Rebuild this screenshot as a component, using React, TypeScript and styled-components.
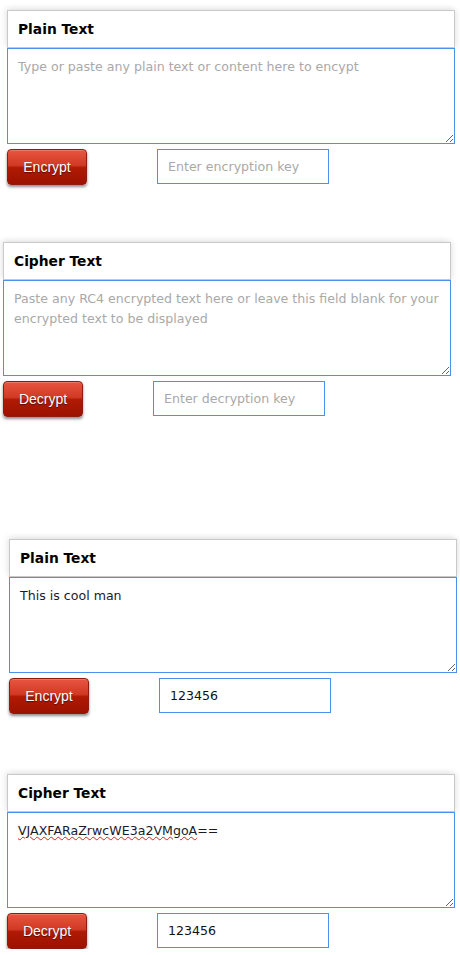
import styled, { createGlobalStyle } from 'styled-components';

const GlobalStyle = createGlobalStyle`
    body {
        margin: 0;
        background: #fff;
        font-family: 'DejaVu Sans', Verdana, sans-serif;
    }
`;

const Page = styled.div`
    display: flex;
    flex-direction: column;
    padding-top: 10px;
    width: 460px;
`;

const Panel = styled.section<{ $top: number; $left: number }>`
    display: flex;
    flex-direction: column;
    width: 448px;
    margin-top: ${p => p.$top}px;
    margin-left: ${p => p.$left}px;
`;

const Header = styled.div`
    height: 36px;
    display: flex;
    align-items: center;
    padding-left: 10px;
    background: #fff;
    border: 1px solid #c9c9c9;
    box-shadow: -2px -2px 6px rgba(0, 0, 0, 0.08), 2px 0 6px rgba(0, 0, 0, 0.08);
`;

const Title = styled.h2`
    margin: 0;
    font-size: 13.8px;
    font-weight: bold;
    color: #000;
`;

const areaStyles = `
    box-sizing: border-box;
    width: 448px;
    height: 96px;
    margin: 0;
    padding: 8px 10px;
    border: 1px solid #4a92ee;
    font-family: 'DejaVu Sans', Verdana, sans-serif;
    font-size: 12.6px;
    line-height: 20px;
    color: #1a1a2a;
    background: #fff;
    outline: none;
`;

const Area = styled.textarea`
    ${areaStyles}
    display: block;
    resize: vertical;
    &::placeholder {
        color: #a9a9a9;
    }
`;

const AreaBox = styled.div`
    ${areaStyles}
    resize: vertical;
    overflow: auto;
`;

const Misspelt = styled.span`
    text-decoration: underline wavy #e0201a;
    text-decoration-thickness: 1px;
    text-underline-offset: 1px;
`;

const Controls = styled.div`
    display: flex;
    align-items: flex-start;
    gap: 70px;
    margin-top: 5px;
`;

const Button = styled.button`
    width: 80px;
    height: 36px;
    padding: 0;
    border: 1px solid #8e1c10;
    border-radius: 4px;
    background: linear-gradient(to bottom, #e85540 0%, #d13a25 45%, #b01a04 52%, #9c1200 100%);
    box-shadow: 0 2px 3px rgba(0, 0, 0, 0.45), inset 0 1px 0 rgba(255, 255, 255, 0.2);
    color: #fff;
    font-family: 'Liberation Sans', Arial, sans-serif;
    font-size: 14px;
    text-shadow: 0 1px 1px rgba(0, 0, 0, 0.5);
    cursor: pointer;
`;

const KeyInput = styled.input`
    box-sizing: border-box;
    width: 172px;
    height: 35px;
    padding: 0 10px;
    border: 1px solid #4a92ee;
    font-family: 'DejaVu Sans', Verdana, sans-serif;
    font-size: 12.6px;
    color: #111;
    outline: none;
    &::placeholder {
        color: #a9a9a9;
    }
`;

export default function App() {
    return (
        <Page>
            <GlobalStyle />
            <Panel $top={0} $left={7}>
                <Header><Title>Plain Text</Title></Header>
                <Area placeholder="Type or paste any plain text or content here to encypt" />
                <Controls>
                    <Button>Encrypt</Button>
                    <KeyInput placeholder="Enter encryption key" />
                </Controls>
            </Panel>
            <Panel $top={57} $left={3}>
                <Header><Title>Cipher Text</Title></Header>
                <Area placeholder="Paste any RC4 encrypted text here or leave this field blank for your encrypted text to be displayed" />
                <Controls>
                    <Button>Decrypt</Button>
                    <KeyInput placeholder="Enter decryption key" />
                </Controls>
            </Panel>
            <Panel $top={122} $left={9}>
                <Header><Title>Plain Text</Title></Header>
                <Area defaultValue="This is cool man" />
                <Controls>
                    <Button>Encrypt</Button>
                    <KeyInput defaultValue="123456" />
                </Controls>
            </Panel>
            <Panel $top={60} $left={7}>
                <Header><Title>Cipher Text</Title></Header>
                <AreaBox role="textbox">
                    <Misspelt>VJAXFARaZrwcWE3a2VMgoA</Misspelt>==
                </AreaBox>
                <Controls>
                    <Button>Decrypt</Button>
                    <KeyInput defaultValue="123456" />
                </Controls>
            </Panel>
        </Page>
    );
}
